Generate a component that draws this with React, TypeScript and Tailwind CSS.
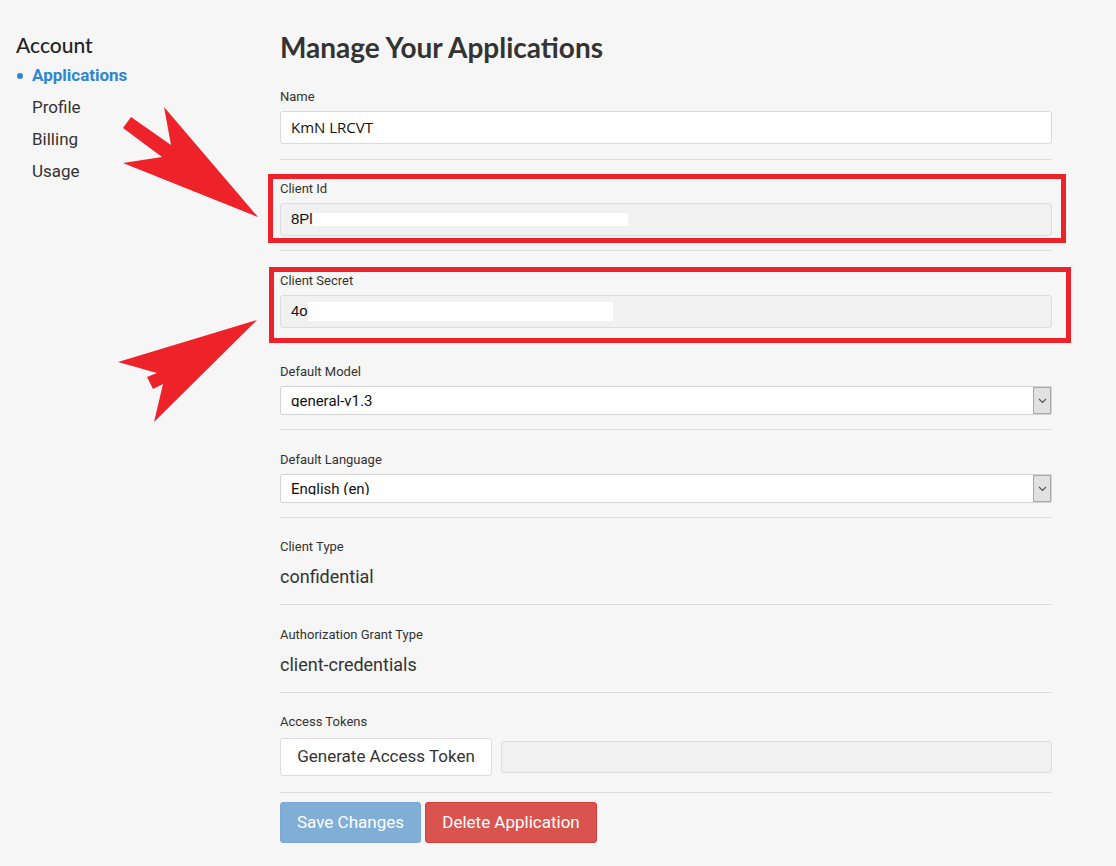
import React from 'react'

const labelCls = 'block h-[18px] text-[13px] leading-[18px] text-[#333]'

function Field({
  label,
  children,
  pt = 'pt-5',
  pb = 'pb-[14px]',
}: {
  label: string
  children: React.ReactNode
  pt?: string
  pb?: string
}) {
  return (
    <div className={`border-b border-[#dddddd] ${pt} ${pb}`}>
      <span className={labelCls}>{label}</span>
      {children}
    </div>
  )
}

// select look-alike; the text is clipped at the bottom like in the screenshot
function SelectBox({ value }: { value: string }) {
  return (
    <div className="mt-[5px] flex h-[29px] rounded-[2px] border border-[#d3d3d3] bg-white">
      <div className="flex-1">
        <div className="h-[20px] overflow-hidden pl-[10px] pt-[4px] text-[15px] leading-[20px] text-[#111]">{value}</div>
      </div>
      <div className="flex w-[18px] items-center justify-center border border-[#a9a9a9] bg-[#e1e1e1]">
        <svg width="9" height="6" viewBox="0 0 9 6" fill="none" stroke="#555" strokeWidth="1.2">
          <path d="M1 1l3.5 3.5L8 1" />
        </svg>
      </div>
    </div>
  )
}

export default function App() {
  const nav = ['Profile', 'Billing', 'Usage']
  return (
    <div className="relative min-h-[866px] w-full bg-[#f6f6f6] font-['Roboto',sans-serif]">
      <div className="flex">
        <aside className="w-[280px] shrink-0 pl-4 pt-[32px]">
          <h2 className="font-['Lato',sans-serif] text-[21px] font-medium leading-[26px] text-[#222]">Account</h2>
          <ul className="mt-[2px]">
            <li className="flex h-[32px] items-center">
              <span className="ml-[1px] mr-[9px] h-[6px] w-[6px] rounded-full bg-[#2e86d0]" />
              <span className="text-[17px] font-bold text-[#2e86d0]">Applications</span>
            </li>
            {nav.map((n) => (
              <li key={n} className="flex h-[32px] items-center pl-4 text-[17px] text-[#333]">
                {n}
              </li>
            ))}
          </ul>
        </aside>

        <main className="w-[772px] pt-[29px]">
          <h1 className="mb-[3px] font-['Lato',sans-serif] text-[28px] font-bold leading-[36px] text-[#333]">
            Manage Your Applications
          </h1>

          <Field label="Name" pb="pb-[15px]">
            <div className="mt-[5px] flex h-[33px] items-center rounded-[3px] border border-[#dadada] bg-white px-[10px] font-['Open_Sans',sans-serif] text-[15px] text-[#111]">
              KmN LRCVT
            </div>
          </Field>

          <Field label="Client Id">
            <div className="mt-[5px] flex h-[33px] items-center rounded-[3px] border border-[#dddddd] bg-[#f1f1f1] pl-[10px] font-['Liberation_Sans',sans-serif] text-[15px] text-[#111]">
              8Pl<span className="h-[13px] w-[315px] bg-white" />
            </div>
          </Field>

          <Field label="Client Secret" pt="pt-[21px]">
            <div className="mt-[5px] flex h-[33px] items-center rounded-[3px] border border-[#dddddd] bg-[#f1f1f1] pl-[10px] font-['Liberation_Sans',sans-serif] text-[15px] text-[#111]">
              4o<span className="h-[19px] w-[305px] bg-white" />
            </div>
          </Field>

          <Field label="Default Model">
            <SelectBox value="general-v1.3" />
          </Field>

          <Field label="Default Language" pt="pt-[21px]">
            <SelectBox value="English (en)" />
          </Field>

          <Field label="Client Type">
            <div className="mt-2 text-[18px] leading-[26px] text-[#333]">confidential</div>
          </Field>

          <Field label="Authorization Grant Type" pt="pt-[21px]">
            <div className="mt-2 text-[18px] leading-[26px] text-[#333]">client-credentials</div>
          </Field>

          <Field label="Access Tokens" pb="pb-4">
            <div className="mt-[7px] flex items-center gap-[9px]">
              <button className="h-[38px] w-[212px] rounded-[3px] border border-[#dddddd] bg-white text-[17px] text-[#333]">
                Generate Access Token
              </button>
              <div className="h-[32px] flex-1 rounded-[3px] border border-[#dddddd] bg-[#f1f1f1]" />
            </div>
          </Field>

          <div className="mt-[9px] flex gap-1">
            <button className="h-[41px] w-[141px] rounded-[3px] border border-[#7aa8d2] bg-[#80aed6] text-[17px] text-white">
              Save Changes
            </button>
            <button className="h-[41px] w-[172px] rounded-[3px] border border-[#d43f3a] bg-[#d9534f] text-[17px] text-white">
              Delete Application
            </button>
          </div>
        </main>
      </div>

      {/* annotation overlay: red boxes and arrows */}
      <div className="pointer-events-none absolute left-[268px] top-[174px] h-[69px] w-[798px] border-[5px] border-[#ee2229]" />
      <div className="pointer-events-none absolute left-[269px] top-[267px] h-[76px] w-[802px] border-[5px] border-[#ee2229]" />
      <svg className="pointer-events-none absolute left-0 top-0" width="1116" height="866" viewBox="0 0 1116 866">
        <polygon fill="#ee2229" points="258,217 164,107 171,145 131,117 123,128 162,157 123,163" />
        <polygon fill="#ee2229" points="257,320 118,362 157,373 147,377 153,389 163,384 154,422" />
      </svg>
    </div>
  )
}
